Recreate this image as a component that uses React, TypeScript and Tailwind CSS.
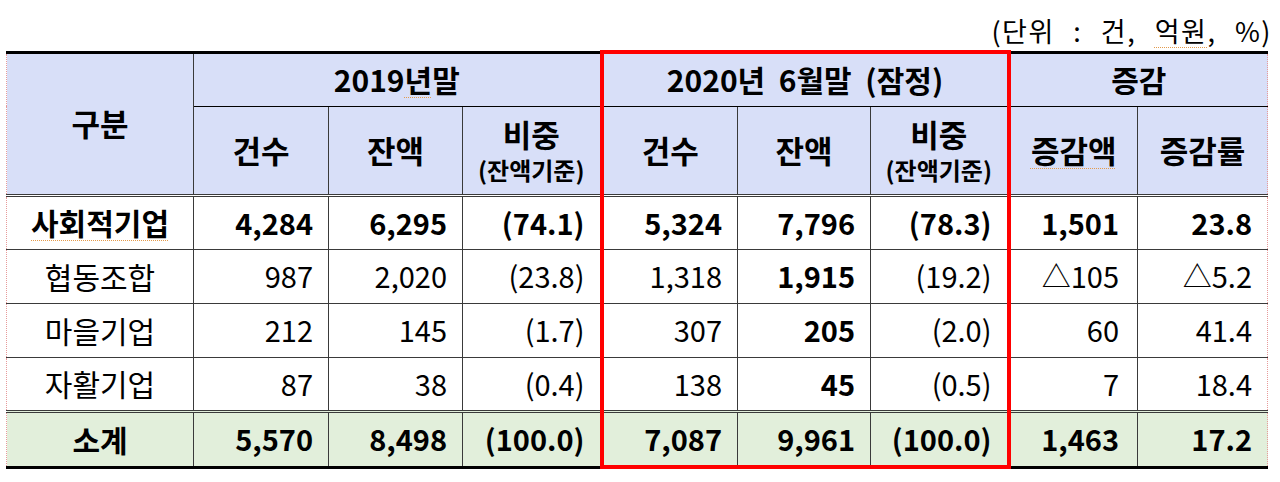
const font = { fontFamily: '"Noto Sans CJK KR", "Noto Sans", sans-serif' };

type Row = {
  name: string;
  bold?: boolean;
  total?: boolean;
  cells: string[];
  boldCols?: number[];
};

const rows: Row[] = [
  { name: "사회적기업", bold: true, cells: ["4,284", "6,295", "(74.1)", "5,324", "7,796", "(78.3)", "1,501", "23.8"] },
  { name: "협동조합", cells: ["987", "2,020", "(23.8)", "1,318", "1,915", "(19.2)", "△105", "△5.2"], boldCols: [4] },
  { name: "마을기업", cells: ["212", "145", "(1.7)", "307", "205", "(2.0)", "60", "41.4"], boldCols: [4] },
  { name: "자활기업", cells: ["87", "38", "(0.4)", "138", "45", "(0.5)", "7", "18.4"], boldCols: [4] },
  { name: "소계", bold: true, total: true, cells: ["5,570", "8,498", "(100.0)", "7,087", "9,961", "(100.0)", "1,463", "17.2"] },
];

const widths = [187, 135, 134, 139, 136, 133, 138, 129, 130];

const spell = "underline decoration-dotted decoration-[#e39a4c] decoration-1 underline-offset-[5px]";
const pinkRight = "border-r border-r-[#e79a9a] [border-right-style:dotted]";
const pinkLeft = "border-l border-l-[#e79a9a] [border-left-style:dotted]";

// ci: 0..7 index among the number columns
function cellBorder(ci: number, ri: number, total: boolean) {
  let c = "";
  if (ci === 3) c = "border-l-4 border-l-[#ff0000] border-r border-r-[#3a3a3a]";
  else if (ci === 5) c = "border-r-4 border-r-[#ff0000] border-l border-l-[#3a3a3a]";
  else if (ci === 7) c = "border-l border-l-[#3a3a3a] " + pinkRight;
  else c = "border-x border-[#3a3a3a]";
  if (total && ci >= 3 && ci <= 5) c += " border-b-4 border-b-[#ff0000]";
  if (ri === 0) c += " border-t-[3px] border-t-[#3a3a3a] [border-top-style:double]";
  if (total) c += " border-t-[3px] border-t-[#3a3a3a] [border-top-style:double]";
  return c;
}

export default function App() {
  return (
    <div className="w-[1280px] h-[482px] bg-white text-black" style={font}>
      <div className="h-[50px] flex items-end justify-end pr-[8px] pb-[6px] text-[27px] leading-none whitespace-pre tracking-[1.5px] [word-spacing:11px]">
        (단위 : 건, <span className={spell}>억원</span>, %)
      </div>
      <table className="ml-[6px] table-fixed border-collapse w-[1262px]">
        <colgroup>
          {widths.map((w, i) => (
            <col key={i} style={{ width: w }} />
          ))}
        </colgroup>
        <thead className="bg-[#d8dff8] font-bold text-[30px]">
          <tr className="h-[54px]">
            <th rowSpan={2} className={"border-t-[3px] border-t-black border-r border-r-[#3a3a3a] font-bold text-[31px] " + pinkLeft}>
              구분
            </th>
            <th colSpan={3} className="border-t-[3px] border-t-black border-b border-b-black font-bold">
              2019<span className={spell}>년</span>말
            </th>
            <th colSpan={3} className="border-4 border-[#ff0000] border-b border-b-black font-bold whitespace-pre">
              2020년  6월말  (잠정)
            </th>
            <th colSpan={2} className={"border-t-[3px] border-t-black border-b border-b-black font-bold " + pinkRight}>
              증감
            </th>
          </tr>
          <tr className="h-[89px] text-[31px]">
            <th className="border-r border-[#3a3a3a] font-bold">건수</th>
            <th className="border-r border-[#3a3a3a] font-bold">잔액</th>
            <th className="font-bold leading-tight">
              <div>비중</div>
              <div className="text-[24px] mt-[2px]">(잔액기준)</div>
            </th>
            <th className="border-l-4 border-l-[#ff0000] border-r border-r-[#3a3a3a] font-bold">건수</th>
            <th className="border-r border-[#3a3a3a] font-bold">잔액</th>
            <th className="border-r-4 border-r-[#ff0000] font-bold leading-tight">
              <div>비중</div>
              <div className="text-[24px] mt-[2px]">(잔액기준)</div>
            </th>
            <th className="border-r border-[#3a3a3a] font-bold">
              <span className={spell}>증감액</span>
            </th>
            <th className={"font-bold " + pinkRight}>증감률</th>
          </tr>
        </thead>
        <tbody className="text-[29px]">
          {rows.map((r, ri) => (
            <tr
              key={r.name}
              className={
                (r.total ? "h-[56px] bg-[#e2efdb] border-b-[3px] border-b-black " : "h-[54px] border-b border-[#3a3a3a] ") +
                (r.bold ? "font-bold" : "font-normal")
              }
            >
              <td
                className={
                  "text-center text-[30px] border-r border-r-[#3a3a3a] " +
                  pinkLeft +
                  (ri === 0 || r.total ? " border-t-[3px] border-t-[#3a3a3a] [border-top-style:double]" : "")
                }
              >
                <span className={r.name === "사회적기업" ? spell : ""}>{r.name}</span>
              </td>
              {r.cells.map((c, ci) => (
                <td
                  key={ci}
                  className={
                    "text-right " +
                    (ci === 6 ? "pr-[18px] " : "pr-[15px] ") +
                    cellBorder(ci, ri, !!r.total) +
                    (r.boldCols?.includes(ci) ? " font-bold" : "")
                  }
                >
                  {c}
                </td>
              ))}
            </tr>
          ))}
        </tbody>
      </table>
    </div>
  );
}
